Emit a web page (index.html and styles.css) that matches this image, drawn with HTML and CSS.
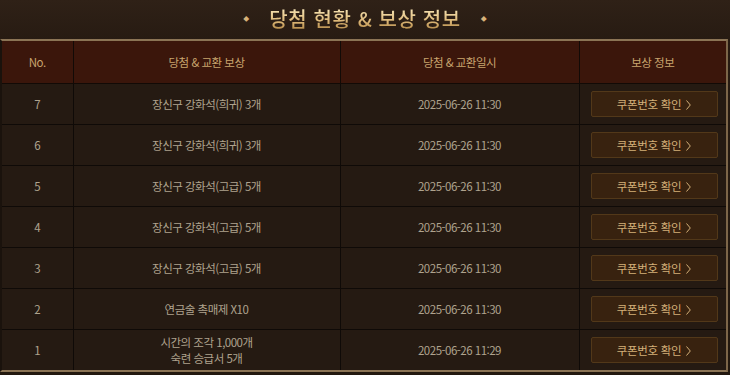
FILE: index.html
```html
<!DOCTYPE html>
<html lang="ko">
<head>
<meta charset="utf-8">
<link rel="stylesheet" href="styles.css">
</head>
<body>
<div class="page">
  <h2 class="title"><span class="dot">◆</span><span class="title-text">당첨 현황 &amp; 보상 정보</span><span class="dot">◆</span></h2>
  <div class="board">
    <table class="list">
      <colgroup>
        <col class="c-no"><col class="c-item"><col class="c-date"><col class="c-info">
      </colgroup>
      <thead>
        <tr><th>No.</th><th>당첨 &amp; 교환 보상</th><th>당첨 &amp; 교환일시</th><th>보상 정보</th></tr>
      </thead>
      <tbody>
        <tr><td>7</td><td>장신구 강화석(희귀) 3개</td><td>2025-06-26 11:30</td><td><button class="btn">쿠폰번호 확인<svg class="chev" viewBox="0 0 5 10" width="5" height="10"><polyline points="0.5,0.5 4.3,5 0.5,9.5"/></svg></button></td></tr>
        <tr><td>6</td><td>장신구 강화석(희귀) 3개</td><td>2025-06-26 11:30</td><td><button class="btn">쿠폰번호 확인<svg class="chev" viewBox="0 0 5 10" width="5" height="10"><polyline points="0.5,0.5 4.3,5 0.5,9.5"/></svg></button></td></tr>
        <tr><td>5</td><td>장신구 강화석(고급) 5개</td><td>2025-06-26 11:30</td><td><button class="btn">쿠폰번호 확인<svg class="chev" viewBox="0 0 5 10" width="5" height="10"><polyline points="0.5,0.5 4.3,5 0.5,9.5"/></svg></button></td></tr>
        <tr><td>4</td><td>장신구 강화석(고급) 5개</td><td>2025-06-26 11:30</td><td><button class="btn">쿠폰번호 확인<svg class="chev" viewBox="0 0 5 10" width="5" height="10"><polyline points="0.5,0.5 4.3,5 0.5,9.5"/></svg></button></td></tr>
        <tr><td>3</td><td>장신구 강화석(고급) 5개</td><td>2025-06-26 11:30</td><td><button class="btn">쿠폰번호 확인<svg class="chev" viewBox="0 0 5 10" width="5" height="10"><polyline points="0.5,0.5 4.3,5 0.5,9.5"/></svg></button></td></tr>
        <tr><td>2</td><td>연금술 촉매제 X10</td><td>2025-06-26 11:30</td><td><button class="btn">쿠폰번호 확인<svg class="chev" viewBox="0 0 5 10" width="5" height="10"><polyline points="0.5,0.5 4.3,5 0.5,9.5"/></svg></button></td></tr>
        <tr><td>1</td><td class="two">시간의 조각 1,000개<br>숙련 승급서 5개</td><td>2025-06-26 11:29</td><td><button class="btn">쿠폰번호 확인<svg class="chev" viewBox="0 0 5 10" width="5" height="10"><polyline points="0.5,0.5 4.3,5 0.5,9.5"/></svg></button></td></tr>
      </tbody>
    </table>
  </div>
</div>
</body>
</html>
```

FILE: styles.css
```css
html, body {
  margin: 0;
  padding: 0;
  background: #1c130c;
}
body {
  width: 730px;
  height: 375px;
  overflow: hidden;
  font-family: "Noto Sans CJK KR", "Noto Sans", sans-serif;
}
.page {
  background: linear-gradient(180deg, #2f2117 0%, #271b12 40px, #22180f 100%);
  height: 375px;
}
.title {
  margin: 0;
  height: 39px;
  display: flex;
  align-items: center;
  justify-content: center;
  gap: 20px;
  font-size: 20px;
  font-weight: 500;
  line-height: 1;
  color: #ead09a;
  padding-bottom: 2px;
  box-sizing: border-box;
}
.title-text {
  background: linear-gradient(180deg, #f7e4b4 0%, #dcb777 60%, #b9904f 100%);
  -webkit-background-clip: text;
  background-clip: text;
  color: transparent;
  letter-spacing: 0.6px;
}
.dot {
  font-size: 6px;
  color: #d7b27a;
}
.board {
  width: 728px;
  border-top: 2px solid #8b7455;
  border-right: 2px solid #7d6649;
  border-bottom: 2px solid #8b7455;
  border-left: 2px solid #1a120c;
  box-sizing: border-box;
}
.list {
  width: 100%;
  border-collapse: collapse;
  table-layout: fixed;
  font-size: 11.5px;
  letter-spacing: -0.5px;
}
.c-no { width: 71px; }
.c-item { width: 267px; }
.c-date { width: 239px; }
.c-info { width: auto; }
.list th {
  height: 42px;
  background: #3b160b;
  color: #c9a56e;
  font-weight: 400;
  border-right: 1px solid #120a06;
  border-bottom: 1px solid #120a06;
  padding: 0;
}
.list td {
  height: 40px;
  background: #251a12;
  color: #afa38e;
  text-align: center;
  border-right: 1px solid #0f0a07;
  border-bottom: 1px solid #0f0a07;
  padding: 0;
  line-height: 14px;
}
.list td.two {
  line-height: 16px;
}
.list th:last-child, .list td:last-child { border-right: none; }
.list tbody tr:last-child td { border-bottom: none; }
.list td:last-child {
  text-align: left;
  padding-left: 11px;
}
.btn {
  width: 127px;
  height: 26px;
  background: #38220f;
  border: 1px solid #523819;
  border-radius: 2px;
  color: #d4b079;
  font-family: inherit;
  font-size: 11.5px;
  letter-spacing: -0.3px;
  padding: 0;
  cursor: pointer;
  display: inline-flex;
  align-items: center;
  justify-content: center;
  gap: 5px;
}
.chev {
  fill: none;
  stroke: #d4b079;
  stroke-width: 1;
  margin-top: 1px;
}
```
